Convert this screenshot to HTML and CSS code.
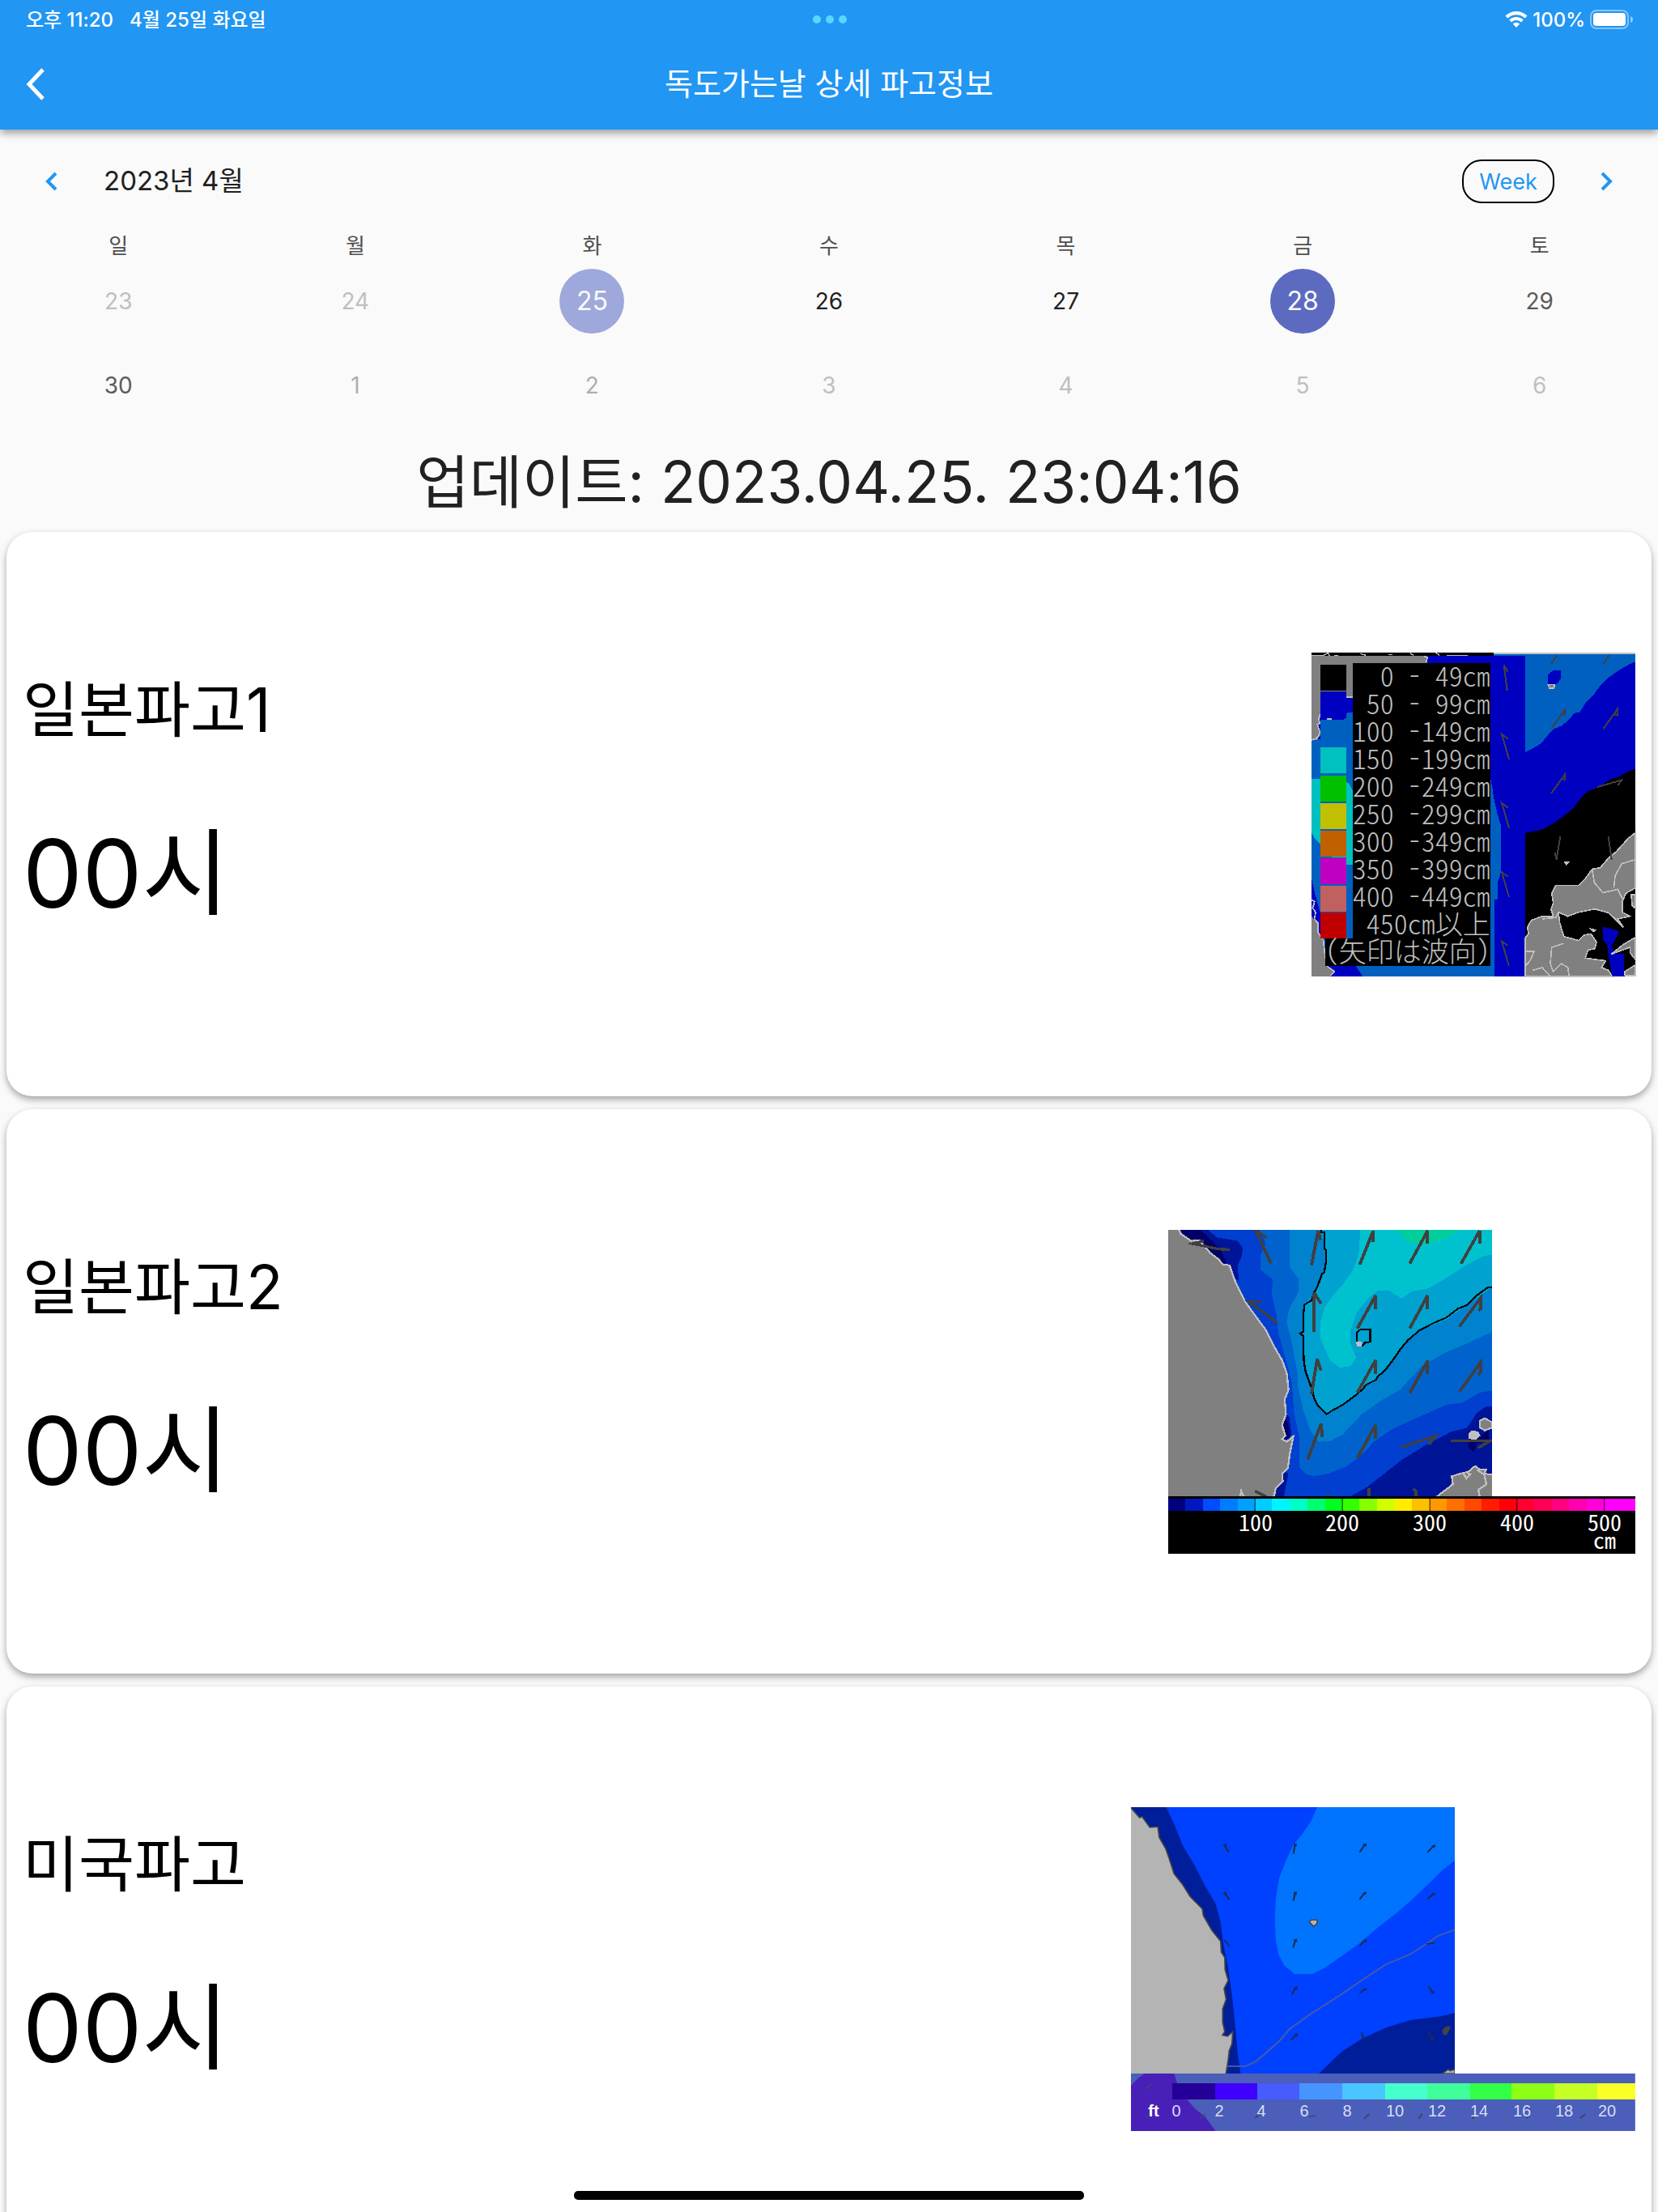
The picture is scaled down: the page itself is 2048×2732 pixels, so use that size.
FILE: index.html
```html
<!DOCTYPE html>
<html lang="ko">
<head>
    <meta charset="UTF-8">
    <meta name="viewport" content="width=device-width, initial-scale=1.0">
    <title>독도가는날 상세 파고정보</title>
    <link rel="stylesheet" href="styles.css">
</head>
<body>
    <header class="topbar">
        <div class="status">
            <div class="status-left">
                <span>오후 11:20</span>
                <span>4월 25일 화요일</span>
            </div>
            <div class="dots"><i></i><i></i><i></i></div>
            <div class="status-right">
                <svg class="wifi" viewBox="0 0 28 28">
                    <path d="M0.5 9.5 A19.5 19.5 0 0 1 27.5 9.5 L24.6 12.6 A15.2 15.2 0 0 0 3.4 12.6 Z"/>
                    <path d="M5.2 14.5 A12.6 12.6 0 0 1 22.8 14.5 L19.9 17.5 A8.4 8.4 0 0 0 8.1 17.5 Z"/>
                    <path d="M9.8 19.5 A6 6 0 0 1 18.2 19.5 L14 24 Z"/>
                </svg>
                <span>100%</span>
                <svg class="battery" viewBox="0 0 54 24">
                    <rect x="1" y="1" width="46" height="22" rx="7" fill="none" stroke="#fff" stroke-opacity=".45" stroke-width="2"/>
                    <rect x="4" y="4" width="40" height="16" rx="4"/>
                    <path d="M50 8 Q53 9 53 12 Q53 15 50 16 Z" opacity=".5"/>
                </svg>
            </div>
        </div>
        <div class="appbar">
            <button class="back" type="button" aria-label="뒤로">
                <svg viewBox="0 0 24 40"><path d="M21 2 L4 20 L21 38" fill="none" stroke="#fff" stroke-width="5"/></svg>
            </button>
            <h1>독도가는날 상세 파고정보</h1>
        </div>
    </header>

    <main>
        <section class="calendar">
            <div class="cal-header">
                <button class="arrow" type="button" aria-label="이전">
                    <svg viewBox="0 0 16 24"><path d="M13 2 L3 12 L13 22" fill="none" stroke="#2196f3" stroke-width="4"/></svg>
                </button>
                <h2>2023년 4월</h2>
                <button class="format" type="button">Week</button>
                <button class="arrow" type="button" aria-label="다음">
                    <svg viewBox="0 0 16 24"><path d="M3 2 L13 12 L3 22" fill="none" stroke="#2196f3" stroke-width="4"/></svg>
                </button>
            </div>
            <table class="days">
                <thead>
                    <tr><th>일</th><th>월</th><th>화</th><th>수</th><th>목</th><th>금</th><th>토</th></tr>
                </thead>
                <tbody>
                    <tr>
                        <td class="off">23</td>
                        <td class="off">24</td>
                        <td><span class="day today">25</span></td>
                        <td>26</td>
                        <td>27</td>
                        <td><span class="day selected">28</span></td>
                        <td class="weekend">29</td>
                    </tr>
                    <tr>
                        <td class="weekend">30</td>
                        <td class="out">1</td>
                        <td class="out">2</td>
                        <td class="off">3</td>
                        <td class="off">4</td>
                        <td class="off">5</td>
                        <td class="off">6</td>
                    </tr>
                </tbody>
            </table>
        </section>

        <p class="update">업데이트: 2023.04.25. 23:04:16</p>

        <article class="card">
            <div class="card-text">
                <h3>일본파고1</h3>
                <p>00시</p>
            </div>
            <svg class="map" viewBox="60 48 1200 1200" shape-rendering="crispEdges">
                <rect x="60" y="48" width="1200" height="1200" fill="#0000c0"/>
                <!-- sea, left side -->
                <path fill="#0060c0" d="M60 370 H92 V296 H180 L192 270 H213 V1210 H724 V515 L730 550 L738 600 L750 650 L762 690 V860 L750 900 V960 L738 965 V1248 H250 L225 1210 H92 V1010 L75 950 L60 885 Z"/>
                <path fill="#00c0c0" d="M60 515 H92 V755 L70 735 L60 715 Z M188 525 L200 535 L213 560 V833 H188 V808 H135 V800 H188 Z"/>
                <path fill="#808080" d="M60 60 H490 V87 H213 V212 H188 V192 H92 V290 L84 320 L92 355 L80 372 H60 Z M60 1025 L82 1050 L84 1085 L100 1110 L108 1140 L112 1205 L145 1225 L130 1248 H60 Z"/>
                <path fill="none" stroke="#c0c0c0" stroke-width="5" d="M92 275 L86 296 L92 310 L82 315 L92 345 L80 365 L60 372 M60 965 L72 970 L64 995 L76 1010 L70 1035 L84 1050 L84 1085 L104 1115 L110 1170 L118 1210 L145 1230 L130 1246 M188 212 H213 M478 62 L490 66 L484 84 M117 294 H136"/>
                <rect x="60" y="48" width="674" height="12" fill="#000"/>
                <path fill="none" stroke="#c0c0c0" stroke-width="4" d="M60 58 H105 L122 50 L126 60 M145 58 H160 M240 52 L262 58 M345 56 H360 M425 50 L438 58 M520 48 L535 58 M560 58 H640"/>
                <!-- right side -->
                <rect x="734" y="48" width="526" height="7" fill="#c0c0c0"/>
                <path fill="#0060c0" d="M852 55 H1260 V82 L1240 90 L1205 110 L1165 137 L1130 170 L1105 205 L1075 235 L1055 268 L1035 272 L1010 300 L985 320 L960 330 L935 355 L910 385 L885 400 L870 408 L852 418 V60 H734 V55 Z"/>
                <path fill="#0000c0" d="M935 130 L955 115 H984 V145 L970 164 H935 Z"/>
                <path fill="#000" d="M1260 478 L1235 488 L1200 508 L1165 518 L1130 545 L1085 562 L1055 592 L1030 625 L990 657 L950 685 L915 704 L852 716 V1248 H1260 Z"/>
                <path fill="#808080" stroke="#c0c0c0" stroke-width="5" d="M1260 716 L1235 735 L1190 785 L1160 810 L1130 845 L1100 850 L1075 885 L1050 910 H965 L950 940 L956 975 L948 1000 L956 1025 H915 L875 1040 L860 1065 L864 1090 L852 1105 V1248 H1175 L1160 1225 L1135 1215 L1150 1190 L1075 1180 L1085 1150 L1110 1145 L1116 1120 L1095 1090 L1070 1095 L1050 1115 L995 1100 L980 1050 L975 1010 L1010 1025 L1050 1010 L1110 998 L1160 1012 L1185 1035 L1215 1065 L1195 1035 L1240 1025 L1212 1010 V970 L1225 940 L1260 920 Z"/>
                <path fill="none" stroke="#c0c0c0" stroke-width="5" d="M1100 850 L1108 900 L1140 938 L1195 925 L1212 960 M1180 920 L1185 875 L1210 830 L1260 815 M975 1010 L965 1030 L915 1035 M995 1125 L950 1140 L945 1200 L955 1230 L985 1200 L1010 1215 L1015 1248 M852 1155 L885 1155 L870 1190 L852 1210 M880 1225 L915 1215 L945 1248"/>
                <path fill="#0000c0" d="M1140 1064 L1165 1070 L1200 1080 L1185 1115 L1170 1135 L1190 1165 L1217 1165 V1248 H1175 L1165 1200 L1155 1130 L1140 1110 Z"/>
                <path fill="#808080" stroke="#c0c0c0" stroke-width="5" d="M1170 1166 L1215 1130 L1260 1103 V1185 L1240 1160 L1240 1140 L1185 1160 Z"/>
                <path fill="#808080" stroke="#c0c0c0" stroke-width="5" d="M1245 945 H1260 V995 L1248 985 Z M1220 1230 L1240 1218 L1260 1205 V1245 H1222 Z M937 166 H962 L958 180 H942 Z M998 824 H1012 L1004 832 Z M1095 1072 L1112 1076 L1104 1082 Z"/>
                <g fill="none" stroke="#404040" stroke-width="6">
                    <path d="M785 188 L773 95 L788 120 M792 443 L765 350 L788 368 M792 698 L765 605 L788 623 M792 953 L765 862 L788 878 M792 1210 L765 1118 L788 1134"/>
                    <path d="M948 330 L1000 258 V280 L985 275 M1142 330 L1193 258 V280 L1180 275 M948 570 L1000 498 V520 L985 515 M948 90 L970 58 M1142 90 L1163 58"/>
                    <path d="M1120 546 L1210 520 L1195 540 M982 728 L968 815 L962 790 M1160 728 L1172 815"/>
                </g>
                <!-- legend -->
                <path fill="#000" d="M213 87 H724 V1210 H112 V1108 H213 Z"/>
                <rect x="92" y="94" width="96" height="96" fill="#000"/>
                <rect x="92" y="196" width="96" height="96" fill="#0000c0"/>
                <rect x="92" y="298" width="96" height="96" fill="#0060c0"/>
                <rect x="92" y="400" width="96" height="96" fill="#00c0c0"/>
                <rect x="92" y="503" width="96" height="96" fill="#00c000"/>
                <rect x="92" y="605" width="96" height="96" fill="#c0c000"/>
                <rect x="92" y="707" width="96" height="96" fill="#c06000"/>
                <rect x="92" y="809" width="96" height="96" fill="#c000c0"/>
                <rect x="92" y="911" width="96" height="96" fill="#c06060"/>
                <rect x="92" y="1012" width="96" height="96" fill="#c00000"/>
                <g class="legend-jp">
                    <text x="722" y="174">0 - 49cm</text>
                    <text x="722" y="276">50 - 99cm</text>
                    <text x="722" y="378">100 -149cm</text>
                    <text x="722" y="480">150 -199cm</text>
                    <text x="722" y="583">200 -249cm</text>
                    <text x="722" y="685">250 -299cm</text>
                    <text x="722" y="787">300 -349cm</text>
                    <text x="722" y="889">350 -399cm</text>
                    <text x="722" y="991">400 -449cm</text>
                    <text x="722" y="1093">450cm以上</text>
                    <text x="722" y="1194">(矢印は波向)</text>
                </g>
            </svg>
        </article>

        <article class="card">
            <div class="card-text">
                <h3>일본파고2</h3>
                <p>00시</p>
            </div>
            <svg class="map" viewBox="0 0 577 400">
                <clipPath id="sea2"><rect x="33" y="57" width="1015" height="990"/></clipPath>
                <g transform="scale(.3941 .3333) translate(-33 -57)" shape-rendering="crispEdges">
                    <g clip-path="url(#sea2)">
                        <rect x="33" y="57" width="1015" height="990" fill="#003fd0"/>
                        <path fill="#0062cc" d="M320 57 L338 110 L322 150 V205 L360 240 L358 300 L372 370 L378 440 L400 530 L420 620 L428 740 L445 830 L445 940 L465 962 L490 970 L535 960 L590 935 L630 900 L680 840 L735 795 L800 760 L905 705 L955 697 L1010 660 L1048 652 V57 Z"/>
                        <path fill="#0082cf" d="M413 57 V195 L443 240 L440 290 L412 350 L404 400 L420 470 L438 590 L440 640 L455 720 L478 800 L505 842 L540 840 L580 815 L640 740 L700 690 L760 650 L790 610 L830 560 L905 510 L975 475 L1048 435 V57 Z"/>
                        <path fill="#00a2cf" d="M513 57 L527 130 L522 215 L490 290 L460 335 L455 440 L458 540 L485 650 L500 705 L530 740 L580 705 L640 650 L690 600 L760 500 L820 430 L905 390 L970 335 L1048 270 V57 Z"/>
                        <path fill="#00c2cf" d="M635 57 L630 150 L610 210 L580 260 L550 300 L523 345 L510 400 L510 460 L525 500 L540 540 L570 567 L605 562 L622 530 L605 480 L604 430 L625 360 L660 310 L690 282 H725 L765 312 L795 285 L845 275 L905 235 L970 185 L1020 155 L1048 148 V57 Z"/>
                        <path fill="#00cf9c" d="M742 57 L765 75 L785 103 L840 110 L900 90 L948 57 Z"/>
                        <path fill="#001498" d="M120 57 H158 L185 85 L250 98 L267 125 L262 160 L250 190 L255 250 L230 220 L140 110 Z M395 1047 L410 960 L395 950 L368 1047 Z M398 735 L412 750 L420 815 L408 830 L395 800 Z M600 1047 L650 1015 L700 970 L770 905 L840 855 L920 805 L970 790 L1000 735 L1030 712 L1048 710 V1047 Z"/>
                        <path fill="#000068" d="M70 57 H133 L160 85 L200 135 L215 180 L190 180 L140 115 L90 90 Z M390 745 L408 770 L415 825 L395 840 Z M385 990 L365 1047 H350 Z M972 835 L1010 820 L1038 800 V840 L1000 848 L990 880 L975 865 Z"/>
                        <path fill="#808080" stroke="#c0c0c0" stroke-width="6" d="M27 50 H65 L72 72 L105 98 L130 95 L165 143 L190 165 L205 186 L225 188 L245 255 L275 325 L340 430 L370 500 L390 540 L405 590 L410 650 L398 685 L402 740 L390 780 L400 820 L390 833 L405 842 L425 822 L415 880 L408 940 L390 960 L392 990 L370 1015 L362 1055 H27 Z"/>
                        <path fill="#808080" stroke="#c0c0c0" stroke-width="6" d="M870 1050 L925 1000 L922 970 L950 960 L975 952 L995 932 L1010 945 L1030 945 L1024 960 L1055 966 V1055 Z M1010 765 L1025 755 L1048 770 V790 L1025 800 L1010 790 Z"/>
                        <path fill="#c0c0c0" d="M975 812 L985 800 L1005 804 L1012 820 L995 838 L975 830 Z M622 472 H640 L638 490 H624 Z"/>
                        <path fill="none" stroke="#c0c0c0" stroke-width="6" d="M958 960 L968 978 L980 962 L970 958 M1000 945 L1024 965 L1030 1000 L1005 1020 L1010 1047 M258 1047 L262 1025 L270 1047"/>
                        <path fill="none" stroke="#000" stroke-width="6" d="M513 57 V67 H522 V125 L527 130 V180 L522 215 L515 220 L500 270 L490 290 L482 318 L460 335 L456 375 V435 L446 440 L456 450 L458 540 L463 580 L475 620 L485 650 L490 680 L500 705 L520 730 L530 740 L545 728 L580 705 L615 675 L640 650 L655 630 L685 612 L690 600 L715 575 L740 535 L760 500 L785 465 L820 430 L865 402 L905 382 L940 350 L970 335 L1000 300 L1035 270 H1048"/>
                        <path fill="none" stroke="#000" stroke-width="6" d="M624 470 V437 L635 427 H666 V472 L650 475 L640 488"/>
                        <g fill="none" stroke="#404040" stroke-width="10">
                            <path d="M225 130 L190 128 L110 108 L145 98 M355 182 L308 60 L340 85 M482 188 L503 60 L510 95 M633 186 L676 60 V102 M790 182 L846 60 V108 M951 182 L1009 60 V108"/>
                            <path d="M375 402 L285 322 H327 M490 434 V290 L512 330 M626 422 L683 300 V350 M790 422 L846 300 V350 M946 415 L1013 308 V350 L1005 355"/>
                            <path d="M482 667 L500 535 L512 578 M626 660 L683 540 V590 M790 662 L846 542 V590 M946 656 L1013 547 V585 L1005 595"/>
                            <path d="M470 908 L512 775 L516 825 M626 902 L683 780 V830 M762 863 L872 820 L850 852 M918 838 H1043 L1005 865"/>
                            <path d="M662 1014 V1047 M802 1016 L809 1025 V1047 M530 1043 H540 M305 1025 L340 1045"/>
                        </g>
                    </g>
                    <rect x="33" y="1044" width="1464" height="213" fill="#000"/>
                    <rect x="33" y="1053" width="53" height="45" fill="#000080"/>
                    <rect x="86" y="1053" width="55" height="45" fill="#0018c0"/>
                    <rect x="141" y="1053" width="54" height="45" fill="#004cff"/>
                    <rect x="195" y="1053" width="55" height="45" fill="#007cff"/>
                    <rect x="250" y="1053" width="55" height="45" fill="#00a0ff"/>
                    <rect x="305" y="1053" width="54" height="45" fill="#00ccff"/>
                    <rect x="359" y="1053" width="55" height="45" fill="#00f4ff"/>
                    <rect x="414" y="1053" width="55" height="45" fill="#00ffc8"/>
                    <rect x="469" y="1053" width="55" height="45" fill="#00ff70"/>
                    <rect x="524" y="1053" width="55" height="45" fill="#00ff1c"/>
                    <rect x="579" y="1053" width="54" height="45" fill="#34ff00"/>
                    <rect x="633" y="1053" width="55" height="45" fill="#88ff00"/>
                    <rect x="688" y="1053" width="55" height="45" fill="#d0ff00"/>
                    <rect x="743" y="1053" width="54" height="45" fill="#ffec00"/>
                    <rect x="797" y="1053" width="56" height="45" fill="#ffc000"/>
                    <rect x="853" y="1053" width="54" height="45" fill="#ff9800"/>
                    <rect x="907" y="1053" width="55" height="45" fill="#ff7000"/>
                    <rect x="962" y="1053" width="54" height="45" fill="#ff4800"/>
                    <rect x="1016" y="1053" width="55" height="45" fill="#ff1c00"/>
                    <rect x="1071" y="1053" width="55" height="45" fill="#ff0008"/>
                    <rect x="1126" y="1053" width="55" height="45" fill="#ff0030"/>
                    <rect x="1181" y="1053" width="55" height="45" fill="#ff0058"/>
                    <rect x="1236" y="1053" width="54" height="45" fill="#ff0080"/>
                    <rect x="1290" y="1053" width="55" height="45" fill="#ff00b0"/>
                    <rect x="1345" y="1053" width="55" height="45" fill="#ff00d8"/>
                    <rect x="1400" y="1053" width="97" height="45" fill="#ff00ff"/>
                    <path stroke="#000" stroke-opacity=".7" stroke-width="3" d="M305 1050 V1098 M579 1050 V1098 M853 1050 V1098 M1126 1050 V1098 M1400 1050 V1098"/>
                </g>
                <g class="legend-cm">
                    <text x="108" y="372">100</text>
                    <text x="215" y="372">200</text>
                    <text x="323" y="372">300</text>
                    <text x="431" y="372">400</text>
                    <text x="539" y="372">500</text>
                    <text x="539" y="394">cm</text>
                </g>
            </svg>
        </article>

        <article class="card">
            <div class="card-text">
                <h3>미국파고</h3>
                <p>00시</p>
            </div>
            <svg class="map" viewBox="0 0 623 400">
                <clipPath id="sea3"><rect x="40" y="63" width="939" height="990"/></clipPath>
                <g transform="scale(.426 .3333) translate(-40 -63)">
                    <g clip-path="url(#sea3)">
                        <rect x="40" y="63" width="939" height="987" fill="#0040ff"/>
                        <path fill="#0073ff" d="M580 63 L562 115 L535 165 L510 205 L490 260 L470 325 L460 400 L457 480 L460 560 L468 610 L485 650 L515 682 H565 L600 660 L640 625 L700 570 L760 505 L810 455 L860 400 L905 345 L940 300 L979 260 V63 Z"/>
                        <path fill="#001e99" d="M40 63 H142 L165 125 L190 205 L225 280 L255 355 L285 420 L300 490 L308 570 L322 660 L333 760 L342 870 L350 980 L358 1050 H40 Z M585 1050 L650 970 L710 920 L780 880 L850 852 L940 838 L979 825 V1050 Z"/>
                        <path fill="#b4b4b4" stroke="#444" stroke-width="4" d="M36 60 L65 102 L72 98 L95 138 L118 136 L122 175 L140 215 L150 250 L165 310 L190 350 L212 395 L247 440 L250 465 L275 520 L300 560 L302 600 L312 620 L313 665 L322 705 L310 735 L316 775 L306 810 V860 L312 895 L305 908 L320 912 L335 895 L333 940 L325 965 L322 1000 L315 1055 H36 Z"/>
                        <path fill="#b4b4b4" stroke="#444" stroke-width="4" d="M557 488 L563 481 H580 V493 L570 505 Z M942 1050 L960 1035 L965 1040 L979 1035 V1050 Z"/>
                        <path fill="#444" d="M942 890 L952 876 L968 875 L955 908 L945 905 Z"/>
                        <path fill="none" stroke="#4058b0" stroke-width="6" d="M318 1023 H372 L400 1007 L430 975 L470 930 L500 885 L560 830 L640 765 L720 695 L780 645 L850 608 L890 575 L930 540 L979 517"/>
                        <g fill="none" stroke="#1c2c50" stroke-width="5">
                            <path d="M323 230 L311 203 M511 235 L516 200 M703 230 L718 202 M900 230 L918 206 M325 405 L311 380 M511 410 L516 380 M703 405 L718 380 M900 403 L918 383 M326 578 L311 556 M510 584 L517 555 M703 578 L718 556 M896 570 L922 566 M506 757 L518 732 M703 752 L720 736 M903 727 L916 754 M503 927 L520 905 M709 898 L716 928 M903 898 L914 927"/>
                        </g>
                        <g fill="#1c2c50">
                            <path d="M306 202 L318 198 L314 214 Z M510 199 L521 197 L520 210 Z M711 200 L723 197 L722 210 Z M911 206 L923 201 L921 214 Z M306 381 L317 376 L314 392 Z M510 378 L522 376 L520 390 Z M711 381 L723 376 L722 388 Z M911 382 L922 380 L921 392 Z M510 555 L522 550 L521 564 Z M712 556 L724 552 L723 566 Z M512 733 L523 726 L522 742 Z M712 738 L724 732 L722 744 Z M910 750 L920 742 L918 756 Z M512 906 L524 900 L523 914 Z M711 924 L720 915 L718 930 Z M908 922 L918 914 L916 930 Z"/>
                        </g>
                    </g>
                    <rect x="40" y="1050" width="1462" height="213" fill="#4a5eba"/>
                    <path fill="#4820b8" d="M40 1095 L60 1068 L80 1050 H165 L175 1090 L205 1150 L225 1180 L255 1210 L285 1263 H40 Z"/>
                    <path fill="none" stroke="#4c6898" stroke-width="4" d="M915 1050 L900 1090 M850 1150 L840 1190 L822 1225 V1263"/>
                    <g shape-rendering="crispEdges">
                        <rect x="160" y="1087" width="124" height="60" fill="#250098"/>
                        <rect x="284" y="1087" width="123" height="60" fill="#4000ff"/>
                        <rect x="407" y="1087" width="121" height="60" fill="#465cff"/>
                        <rect x="528" y="1087" width="124" height="60" fill="#4694ff"/>
                        <rect x="652" y="1087" width="124" height="60" fill="#4ac6ff"/>
                        <rect x="776" y="1087" width="124" height="60" fill="#46ffcf"/>
                        <rect x="900" y="1087" width="124" height="60" fill="#40ff9a"/>
                        <rect x="1024" y="1087" width="120" height="60" fill="#32ff46"/>
                        <rect x="1144" y="1087" width="124" height="60" fill="#8cff14"/>
                        <rect x="1268" y="1087" width="124" height="60" fill="#c6ff24"/>
                        <rect x="1392" y="1087" width="110" height="60" fill="#faff28"/>
                    </g>
                    <path fill="none" stroke="#3c4470" stroke-width="5" d="M100 1090 L84 1106 M255 1203 L242 1217 M415 1200 L400 1215 M575 1207 L556 1210 M730 1200 L716 1218 M884 1200 L874 1218 M1036 1200 L1030 1218 M1195 1205 L1186 1216 M1358 1200 L1342 1216 M84 1205 L90 1215"/>
                </g>
                <g class="legend-ft">
                    <text class="unit" x="28" y="382">ft</text>
                    <text x="56" y="382">0</text>
                    <text x="109" y="382">2</text>
                    <text x="161" y="382">4</text>
                    <text x="214" y="382">6</text>
                    <text x="267" y="382">8</text>
                    <text x="326" y="382">10</text>
                    <text x="378" y="382">12</text>
                    <text x="430" y="382">14</text>
                    <text x="483" y="382">16</text>
                    <text x="535" y="382">18</text>
                    <text x="588" y="382">20</text>
                </g>
            </svg>
        </article>
    </main>
    <div class="home-bar"></div>
</body>
</html>
```
FILE: styles.css
```css
* {
    box-sizing: border-box;
}

body {
    margin: 0;
    height: 100vh;
    display: flex;
    flex-direction: column;
    overflow: hidden;
    background-color: #fafafa;
    color: #212121;
    font-family: Inter, "Noto Sans CJK KR", sans-serif;
}

h1, h2, h3, p {
    margin: 0;
    font-weight: 400;
}

button {
    border: none;
    padding: 0;
    background: none;
    font-family: inherit;
}

svg {
    display: block;
}

.topbar {
    position: relative;
    flex: none;
    background-color: #2196f3;
    color: white;
    box-shadow: 0 4px 10px rgba(0, 0, 0, 0.4);
}

.status {
    height: 48px;
    padding: 0 30px 0 32px;
    display: grid;
    grid-template-columns: 1fr auto 1fr;
    align-items: center;
    font-size: 24px;
    font-weight: 500;
}

.status-left {
    display: flex;
    gap: 20px;
    padding-bottom: 4px;
}

.dots {
    display: flex;
    gap: 6px;
}

.dots i {
    width: 10px;
    height: 10px;
    border-radius: 50%;
    background-color: #5ad7ff;
}

.status-right {
    display: flex;
    align-items: center;
    justify-content: flex-end;
    gap: 6px;
}

.status-right svg {
    fill: white;
}

.wifi {
    width: 28px;
    height: 28px;
}

.battery {
    width: 54px;
    height: 24px;
}

.appbar {
    height: 112px;
    padding: 0 32px;
    display: grid;
    grid-template-columns: 1fr auto 1fr;
    align-items: center;
}

.back svg {
    width: 24px;
    height: 40px;
}

.appbar h1 {
    padding-bottom: 8px;
    font-size: 38px;
}

main {
    flex: 1;
    min-height: 0;
    overflow: hidden;
}

.cal-header {
    height: 128px;
    padding: 0 56px;
    display: flex;
    align-items: center;
}

.arrow svg {
    width: 16px;
    height: 24px;
}

.cal-header h2 {
    flex: 1;
    margin-left: 56px;
    padding-bottom: 6px;
    font-size: 33px;
}

.format {
    width: 114px;
    height: 54px;
    margin-right: 56px;
    border: 2px solid black;
    border-radius: 24px;
    color: #2196f3;
    font-size: 27px;
}

.days {
    width: 100%;
    table-layout: fixed;
    border-collapse: collapse;
    text-align: center;
    font-size: 28px;
}

.days th {
    height: 32px;
    padding: 0;
    line-height: 32px;
    font-size: 26px;
    font-weight: 400;
    color: #4f4f4f;
}

.days td {
    height: 104px;
    padding: 0;
}

.days .off {
    color: #bfbfbf;
}

.days .out {
    color: #aeaeae;
}

.days .weekend {
    color: #5a5a5a;
}

.day {
    display: block;
    width: 80px;
    margin: 0 auto;
    border-radius: 50%;
    color: #fafafa;
    font-size: 32px;
    line-height: 80px;
}

.today {
    background-color: #9fa8da;
}

.selected {
    background-color: #5c6bc0;
}

.update {
    padding: 20px 0 15px;
    font-size: 71px;
    line-height: 94px;
    text-align: center;
}

.card {
    height: 697px;
    margin: 0 8px 16px;
    padding: 0 20px;
    display: flex;
    align-items: center;
    justify-content: space-between;
    border-radius: 32px;
    background-color: white;
    color: black;
    box-shadow: 0 4px 8px rgba(0, 0, 0, 0.35);
}

.card-text {
    padding-bottom: 26px;
}

.card h3 {
    font-size: 75px;
    line-height: 100px;
}

.card p {
    margin-top: 72px;
    font-size: 117px;
    line-height: 160px;
}

.map {
    height: 400px;
    overflow: visible;
}

/* half-width digits, like the wave chart's own lettering */
.legend-jp,
.legend-cm {
    font-family: "Noto Sans CJK JP", sans-serif;
    font-feature-settings: "hwid";
}

.legend-jp {
    fill: #c0c0c0;
    font-size: 102px;
    font-weight: 300;
    text-anchor: end;
}

.legend-cm {
    fill: white;
    font-size: 28px;
    text-anchor: middle;
}

.legend-ft {
    fill: #d8dcf4;
    font-family: "Liberation Sans", sans-serif;
    font-size: 20px;
    text-anchor: middle;
}

.legend-ft .unit {
    fill: white;
    font-weight: bold;
}

.home-bar {
    position: fixed;
    left: 50%;
    bottom: 15px;
    width: 630px;
    height: 11px;
    margin-left: -315px;
    border-radius: 5px;
    background-color: black;
}
```
